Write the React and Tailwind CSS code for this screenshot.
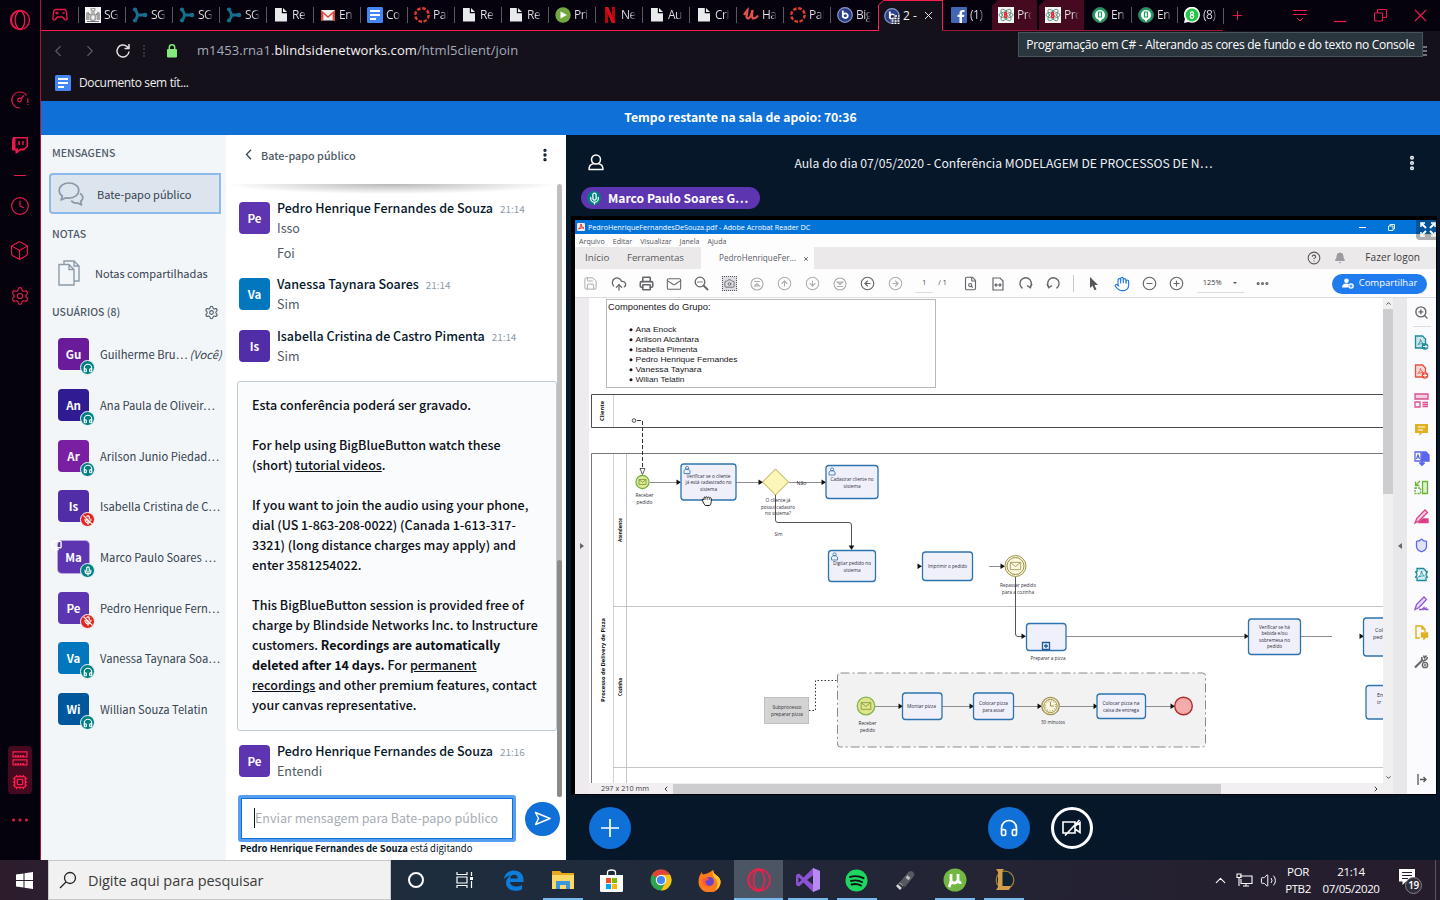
import React from "react";
import {
  Clock, Box, Settings, ChevronLeft, ChevronRight, X, Plus, Headphones, Mic, MicOff,
  Monitor, Search, Save, CloudUpload, Printer, Mail, Camera, CircleArrowLeft, CircleArrowRight,
  CircleArrowUp, CircleArrowDown, FileSearch, RotateCw, RotateCcw, Hand, CircleMinus, CirclePlus,
  CircleHelp, Bell, EllipsisVertical, Ellipsis, ZoomIn, Shield, Volume2, ChevronUp, Cpu,
} from "lucide-react";

const BBB = "font-['Noto_Sans_CJK_JP',sans-serif]";
const UI = "font-['Open_Sans',sans-serif]";

/* ---------- favicons ---------- */
const Fav = ({ kind }) => {
  switch (kind) {
    case "crest":
      return (
        <svg width="16" height="16" viewBox="0 0 16 16"><rect width="16" height="16" fill="#f4f4f4" />
          <path d="M5.500 1h5v2.500l-1.500 1.500h-2L5.500 3.500zM1 6l2-1.500L4.500 6v7H1zM15 6l-2-1.500L11.500 6v7H15zM5 7h6v6l-3 2-3-2z" fill="#a3a3a3" />
          <path d="M6.500 8.500h3v3.500l-1.500 1-1.500-1zM7 2h2v1.300H7z" fill="#f4f4f4" /><path d="M3.500 6.500l1.500 1.500M12.500 6.500L11 8M2 14.500h12M6 6h4" stroke="#555" strokeWidth=".8" /></svg>
      );
    case "tri":
      return (
        <svg width="16" height="16" viewBox="0 0 16 16"><path d="M3 2.500Q5.500 6 5.500 8T3 13.500M5 8H13" fill="none" stroke="#14708f" strokeWidth="3" />
          <circle cx="3" cy="2.500" r="2.100" fill="#14708f" /><circle cx="3" cy="13.500" r="2.100" fill="#14708f" /><circle cx="13" cy="8" r="2.300" fill="#14708f" /></svg>
      );
    case "file":
      return <svg width="16" height="16" viewBox="0 0 16 16"><path d="M2 1h6.800v5.200H14V14.500H2z" fill="#e9eaec" /><path d="M10 1l4 4h-4z" fill="#e9eaec" /></svg>;
    case "gmail":
      return <svg width="16" height="16" viewBox="0 0 16 16"><path d="M1 3h14v10.500H1z" fill="#f1efee" /><path d="M1 13.500V3l7 6 7-6v10.500h-2.300V6.800L8 11 3.300 6.800v6.700z" fill="#dc4738" /></svg>;
    case "docs":
      return <svg width="16" height="16" viewBox="0 0 16 16"><rect width="16" height="16" rx="1.500" fill="#4387f5" /><path d="M3 4h10M3 8h10M3 12h6" stroke="#fff" strokeWidth="1.800" /></svg>;
    case "canvas":
      return <svg width="16" height="16" viewBox="0 0 16 16"><circle cx="8" cy="8" r="6.700" fill="none" stroke="#e23d2c" strokeWidth="2.400" strokeDasharray="3.600 1.660" /></svg>;
    case "play":
      return <svg width="16" height="16" viewBox="0 0 16 16"><circle cx="8" cy="8" r="7.700" fill="#73a83e" /><path d="M5.500 4.500l6.500 3.500-6.500 3.500z" fill="#fff" /></svg>;
    case "netflix":
      return <svg width="16" height="16" viewBox="0 0 16 16"><path d="M3 0h3v16H3zM10 0h3v16h-3z" fill="#b40610" /><path d="M3 0h3.200L13 16H9.800z" fill="#e50914" /></svg>;
    case "udemy":
      return <svg width="16" height="16" viewBox="0 0 16 16"><path d="M1 8Q4 3.500 4.500 3C4 8 2.500 11.500 5 11.500S8.500 7 9.500 3C9 8 8.500 11.500 10.500 11.500S14 10 15 8.500" fill="none" stroke="#ea5252" strokeWidth="2.200" /></svg>;
    case "bbb":
    case "bbb2":
      return (
        <svg width="16" height="16" viewBox="0 0 16 16"><circle cx="8" cy="8" r="7.300" fill="#2a3f8a" stroke="#8c98c8" strokeWidth="1.200" />
          <path d="M5.800 3.500v7M5.800 8.500a2.500 2.300 0 1 1 0 .4" fill="none" stroke="#fff" strokeWidth="1.800" />
          {kind === "bbb2" && <g><rect x="7" y="7" width="9" height="9" fill="#14111a" opacity=".5" /><path d="M7.500 10.500h8M7.500 13h8M7.500 15.500h8M11 8h4.500" stroke="#fff" strokeWidth="1.600" strokeDasharray="2 1" /></g>}</svg>
      );
    case "facebook":
      return <svg width="16" height="16" viewBox="0 0 16 16"><rect width="16" height="16" rx="1" fill="#4267b2" /><path d="M11 16V10h2l.3-2.300H11V6.300c0-.8.300-1.200 1.200-1.200h1.300V3c-3.200-.5-5 .5-5 3v1.700h-2V10h2v6z" fill="#fff" /></svg>;
    case "react":
      return (
        <svg width="16" height="16" viewBox="0 0 16 16"><rect width="16" height="16" fill="#f7f7f4" />
          <g fill="none" stroke="#5d8a80" strokeWidth=".9"><ellipse cx="8" cy="8" rx="7" ry="3" /><ellipse cx="8" cy="8" rx="7" ry="3" transform="rotate(50 8 8)" /><ellipse cx="8" cy="8" rx="7" ry="3" transform="rotate(-50 8 8)" /></g>
          <rect x="5.700" y="5" width="4.600" height="6" fill="#f7f7f4" /><path d="M6.800 5v6M6.800 5.600h1.500q1 1 0 2.200h-1.500M8.300 7.900q1.500 1.200 0 2.500h-1.500" fill="none" stroke="#e21f26" strokeWidth="1.400" /></svg>
      );
    case "green":
      return <svg width="16" height="16" viewBox="0 0 16 16"><circle cx="8" cy="8" r="7.500" fill="#1f9b63" stroke="#3f6e58" /><circle cx="8" cy="8" r="5" fill="#fff" /><path d="M6.500 5h3v5h-3z" fill="none" stroke="#1f9b63" strokeWidth="1.200" /><path d="M8 15l-2-3h4z" fill="#fff" /></svg>;
    default:
      return (
        <svg width="16" height="16" viewBox="0 0 16 16"><path d="M0 16l1-4.200A8 8 0 1 1 4.500 15z" fill="#fff" /><circle cx="8" cy="8" r="6.500" fill="#25c547" />
          <circle cx="8" cy="6.300" r="1.500" fill="none" stroke="#fff" strokeWidth="1.200" /><circle cx="8" cy="9.600" r="1.700" fill="none" stroke="#fff" strokeWidth="1.200" /></svg>
      );
  }
};

const tabsLeft = [
  ["crest", "SG"], ["tri", "SG"], ["tri", "SG"], ["tri", "SG"], ["file", "Re"], ["gmail", "En"], ["docs", "Co"],
  ["canvas", "Pai"], ["file", "Re"], ["file", "Re"], ["play", "Pri"], ["netflix", "Ne"], ["file", "Au"], ["file", "Cri"],
  ["udemy", "Ha"], ["canvas", "Pai"], ["bbb", "Big"],
];

const TabLabel = ({ children }) => (
  <span className="w-[15px] overflow-hidden whitespace-nowrap bg-gradient-to-r from-[#e4e4e6] from-60% to-[#e4e4e600] bg-clip-text text-[12px] tracking-[-0.5px] text-transparent">
    {children}
  </span>
);

const Tab = ({ kind, label, sep = true, className = "" }) => (
  <div className={`flex h-full shrink-0 items-center gap-[3px] ${className}`}>
    <span className={`h-4 w-px ${sep ? "bg-[#5c5862]" : ""}`} />
    <span className="ml-[3px] shrink-0"><Fav kind={kind} /></span>
    <TabLabel>{label}</TabLabel>
  </div>
);

const TabStrip = () => (
  <div className={`flex h-[31px] items-stretch bg-[#06020d] ${UI}`}>
    <div className="flex w-[37px] items-center justify-center border-b border-[#fa1e4e]">
      <svg width="16" height="14" viewBox="0 0 16 14" fill="none" stroke="#e81a4c" strokeWidth="1.300">
        <path d="M3.500 1.500h9q1.500 0 2 3l.7 6q-.5 2.500-2.500 1L10.500 9h-5L3.300 11.500q-2 1.500-2.500-1l.7-6q.5-3 2-3z" /><path d="M3.500 5h3M5 3.500v3M10.500 5h2" />
      </svg>
    </div>
    <div className="flex w-[800px] border-b border-[#fa1e4e]">
      {tabsLeft.map(([k, l], i) => <Tab key={i} kind={k} label={l} className="w-[47px]" />)}
    </div>
    <div className="relative flex w-[65px] items-center bg-[#14111a] pl-[6px] text-[12px] text-[#f2f2f2]">
      <svg className="absolute inset-0" width="66" height="31"><path d="M0 0h6L1 5z" fill="#06020d" /><path d="M0 30.500h.5V5l5-4.500h59v30" fill="none" stroke="#fa1e4e" /></svg>
      <Fav kind="bbb2" />
      <span className="ml-[3px] w-4 overflow-hidden whitespace-nowrap">2 -</span>
      <X size={13} strokeWidth={1.800} className="ml-[3px]" />
    </div>
    <div className="flex w-[280px] border-b border-[#9b1637]">
      <Tab kind="facebook" label="(1)" sep={false} className="w-[49px] pl-px" />
      <div className="mr-[2px] w-[45px] bg-[#450a1f] [clip-path:polygon(6px_0,100%_0,100%_100%,0_100%,0_6px)]"><Tab kind="react" label="Pro" sep={false} className="-ml-px" /></div>
      <div className="w-[45px] bg-[#450a1f] [clip-path:polygon(6px_0,100%_0,100%_100%,0_100%,0_6px)]"><Tab kind="react" label="Pro" sep={false} className="-ml-px" /></div>
      <Tab kind="green" label="En" sep={false} className="ml-px w-[46px]" />
      <Tab kind="green" label="En" className="w-[46px]" />
      <Tab kind="whats" label="(8)" className="w-[46px]" />
    </div>
    <div className="flex flex-1 items-center text-[#e81a4c]">
      <span className="h-4 w-px bg-[#5c5862]" />
      <Plus size={15} strokeWidth={1.500} className="ml-[6px]" />
      <svg className="ml-[47px]" width="16" height="14" viewBox="0 0 16 14" fill="none" stroke="currentColor"><path d="M1 1.500h14M1 5.500h14M5 9l3 3 3-3" /></svg>
      <svg className="ml-[26px]" width="13" height="14" viewBox="0 0 13 14" stroke="currentColor" fill="none"><path d="M0 12.500h12" strokeWidth="1.300" /></svg>
      <svg className="ml-[27px]" width="13" height="13" viewBox="0 0 13 13" fill="none" stroke="currentColor"><path d="M.5 4h8v8h-8zM3.500 4V.5h9v8H8.500" /></svg>
      <svg className="ml-[27px]" width="13" height="13" viewBox="0 0 13 13" stroke="currentColor" strokeWidth="1.200"><path d="M1 1l11 11M12 1L1 12" /></svg>
    </div>
  </div>
);

const AddressBar = () => (
  <div className={`relative flex h-[70px] flex-col bg-[#14111a] ${UI}`}>
    <div className="flex h-[39px] items-center pl-[8px] text-[#5d5a64]">
      <ChevronLeft size={18} strokeWidth={1.500} />
      <ChevronRight size={18} strokeWidth={1.500} className="ml-[14px]" />
      <svg className="ml-[16px] text-[#e2e2e4]" width="16" height="16" viewBox="0 0 16 16" fill="none" stroke="currentColor" strokeWidth="1.500"><path d="M14 8.500A6 6 0 1 1 12 3.500l1.500 1.500M14 1v4.500H9.500" /></svg>
      <span className="ml-[12px] h-[12px] border-l-2 border-dotted border-[#34303c]" />
      <svg className="ml-[22px]" width="10" height="14" viewBox="0 0 10 14"><rect y="5" width="10" height="8.500" rx="1" fill="#83ea7c" /><path d="M2.300 6V3.500a2.700 2.700 0 0 1 5.400 0V6" fill="none" stroke="#83ea7c" strokeWidth="1.500" /></svg>
      <span className="ml-[20px] whitespace-nowrap text-[13px] tracking-[0.080px] text-[#a6acbb]">m1453.rna1.<span className="text-[#f4f4f6]">blindsidenetworks.com</span>/html5client/join</span>
      <svg className="ml-auto mr-[13px] text-[#d8d8dc]" width="9" height="10" viewBox="0 0 9 10" stroke="currentColor"><path d="M2 1h7M4 5h5M2 9h7" /></svg>
    </div>
    <div className="flex h-[26px] items-center pl-[14px]">
      <Fav kind="docs" />
      <span className="ml-[8px] text-[12px] tracking-[-0.350px] text-[#eeeeef]">Documento sem tít...</span>
    </div>
    <div className="absolute left-[977px] top-[1px] flex h-[25px] w-[405px] items-center justify-center whitespace-nowrap border border-[#46545e] bg-[#2b353e] text-[12px] tracking-[-0.27px] text-white">
      Programação em C# - Alterando as cores de fundo e do texto no Console
    </div>
  </div>
);

const OperaRail = () => (
  <div className="flex w-[41px] flex-col items-center border-r border-[#a5173a] bg-[#06020d] pr-px text-[#e81a4c]">
    <svg className="mt-[9px]" width="22" height="22" viewBox="0 0 22 22" fill="none" stroke="currentColor" strokeWidth="1.300"><circle cx="11" cy="11" r="9.500" /><ellipse cx="11" cy="11" rx="4.800" ry="9" /><path d="M8 2.500Q2.500 5 2.500 11T8 19.500" /></svg>
    <svg className="mt-[60px]" width="18" height="18" viewBox="0 0 18 18" fill="none" stroke="currentColor" strokeWidth="1.200"><path d="M9 17A8 8 0 1 1 15.500 4.500M16.800 7.500v4.500M16.800 13v1" /><circle cx="8.500" cy="9" r="1.800" /><path d="M10 7.500l3-3" /></svg>
    <svg className="mt-[27px]" width="18" height="18" viewBox="0 0 18 18"><path d="M2 1h15v9.500l-4 4H9L6 17.500H4.500v-3H1V4z" fill="currentColor" /><path d="M4.500 2.500h11V10l-3 2.500H9L7 14.500v-2H4.500z" fill="#06020d" /><path d="M8 5v4M12 5v4" stroke="currentColor" strokeWidth="1.500" /></svg>
    <span className="mt-[21px] h-px w-3 bg-current" />
    <Clock className="mt-[20px]" size={20} strokeWidth={1.400} />
    <Box className="mt-[24px]" size={21} strokeWidth={1.300} />
    <Settings className="mt-[25px]" size={20} strokeWidth={1.400} />
    <div className="mt-[440px] flex h-[48px] w-6 flex-col items-center gap-[8px] rounded bg-[#450a1f] pt-[5px] text-[#fa1e4e]">
      <svg width="16" height="15" viewBox="0 0 16 15" fill="none" stroke="currentColor" strokeWidth="1.200"><path d="M1 .8h14v5H1zM1 8.800h14v5H1z" /><path d="M3 5h10M3 13h10" strokeDasharray="1.500 1" strokeWidth="2" /></svg>
      <Cpu size={16} strokeWidth={2} />
    </div>
    <svg className="mt-[24px]" width="18" height="4" viewBox="0 0 18 4" fill="currentColor"><circle cx="2.500" cy="2" r="1.500" /><circle cx="9" cy="2" r="1.500" /><circle cx="15.500" cy="2" r="1.500" /></svg>
  </div>
);

/* ---------- participants ---------- */
const users = [
  ["Gu", "Guilherme Bru…", "bg-[#6a1b9a]", "head"], ["An", "Ana Paula de Oliveir…", "bg-[#311b92]", "head"],
  ["Ar", "Arilson Junio Piedad…", "bg-[#7b1fa2]", "head"], ["Is", "Isabella Cristina de C…", "bg-[#512da8]", "muted"],
  ["Ma", "Marco Paulo Soares …", "bg-[#5e35b1]", "mic"], ["Pe", "Pedro Henrique Fern…", "bg-[#5e35b1]", "muted"],
  ["Va", "Vanessa Taynara Soa…", "bg-[#0277bd]", "head"], ["Wi", "Willian Souza Telatin", "bg-[#01579b]", "head"],
];

const Badge = ({ kind }) => (
  <span className={`absolute -bottom-[5px] left-[22px] flex h-[15px] w-[15px] items-center justify-center rounded-full border border-[#f3f6f9] text-white ${kind === "muted" ? "bg-[#df2721]" : "bg-[#008081]"}`}>
    {kind === "head" ? <Headphones size={10} strokeWidth={2.800} /> : kind === "mic" ? <Mic size={10} strokeWidth={2.800} /> : <MicOff size={10} strokeWidth={2.800} />}
  </span>
);

const Avatar = ({ text, color, children, ring = "" }) => (
  <span className={`relative flex h-8 w-[31px] shrink-0 items-center justify-center rounded text-[11.500px] font-bold leading-4 text-white ${color} ${ring}`}>
    {text}{children}
  </span>
);

const Participants = () => (
  <div className={`flex w-[185px] flex-col bg-[#f3f6f9] text-[#4e5a66] ${BBB}`}>
    <div className="mt-[8px] h-5 pl-[11px] text-[10.500px] font-medium leading-5">MENSAGENS</div>
    <div className="ml-[8px] mt-[10px] flex h-[41px] w-[172px] items-center rounded-l border-2 border-[#8cbaec] bg-[#dce4ed] pl-[7px]">
      <svg width="26" height="24" viewBox="0 0 26 24" fill="none" stroke="#8b9aa8" strokeWidth="1.700" strokeLinejoin="round">
        <path d="M11 1C5.500 1 1.200 4.200 1.200 8.500c0 2.400 1.300 4.300 3.200 5.700L3 18l5-2.200c1 .2 2 .3 3 .3 5.500 0 9.800-3.300 9.800-7.600S16.500 1 11 1z" />
        <path d="M22 11.500c1.700 1 2.800 2.500 2.800 4.200 0 1.500-.8 2.700-2 3.600L23.500 23l-3.500-2c-3 .4-5.500-.5-6.700-2.500" />
      </svg>
      <span className="ml-[13px] text-[11px] leading-4 text-[#36434f]">Bate-papo público</span>
    </div>
    <div className="mt-[10px] h-5 pl-[11px] text-[10.500px] font-medium leading-5">NOTAS</div>
    <div className="mt-[8px] flex h-[41px] items-center pl-[17px]">
      <svg width="22" height="26" viewBox="0 0 22 26" fill="none" stroke="#8b9aa8" strokeWidth="1.400"><path d="M6 4V1h10l5 5v15h-5M16 1v5h5" /><path d="M1 4.500h10l5 5V25H1zM11 4.500v5h5" /></svg>
      <span className="ml-[15px] text-[11px] leading-4 text-[#36434f]">Notas compartilhadas</span>
    </div>
    <div className="mt-[9px] flex h-5 items-center justify-between pl-[11px] pr-[7px] text-[10.500px] font-medium leading-5"><span>USUÁRIOS (8)</span><Settings size={15} strokeWidth={1.700} /></div>
    <div className="mt-[7px] flex flex-col">
      {users.map(([ini, name, color, b], i) => (
        <div key={ini} className="flex h-[50.700px] items-center pl-[17px]">
          <Avatar text={ini} color={color} ring={ini === "Ma" ? "ring-1 ring-[#b9a6de]" : ""}>
            <Badge kind={b} />
            {ini === "Ma" && <Monitor size={11} strokeWidth={3} className="absolute -left-[7px] -top-px text-white" />}
          </Avatar>
          <span className="ml-[11px] whitespace-nowrap text-[11.200px] leading-4 text-[#36434f]">{name}{i === 0 && <i className="ml-[2px]">(Você)</i>}</span>
        </div>
      ))}
    </div>
  </div>
);

/* ---------- chat ---------- */
const Msg = ({ ini, color, name, time, lines, className }) => (
  <div className={`flex gap-[7px] pl-[13px] ${className}`}>
    <Avatar text={ini} color={color} />
    <div className="-mt-[4px] flex flex-col text-[12.500px] text-[#4e5a66]">
      <div className="flex h-5 items-center gap-[7px] whitespace-nowrap leading-5"><span className="font-medium text-[#06172a]">{name}</span><span className="pt-[2px] text-[9.900px] text-[#8b9aa8]">{time}</span></div>
      {lines.map((l, i) => <div key={l} className={`h-5 leading-5 ${i ? "mt-[5px]" : ""}`}>{l}</div>)}
    </div>
  </div>
);

const Chat = () => (
  <div className={`flex w-[340px] flex-col bg-white ${BBB}`}>
    <div className="flex h-[39px] shrink-0 items-center pl-[19px] pr-[13px] text-[#3a4753]">
      <svg width="7" height="11" viewBox="0 0 7 11" fill="none" stroke="currentColor" strokeWidth="1.300"><path d="M6 .8L1.500 5.500 6 10.200" /></svg>
      <span className="ml-[9px] text-[10.800px] font-medium leading-4 text-[#4e5a66]">Bate-papo público</span>
      <EllipsisVertical size={16} strokeWidth={3} className="ml-auto text-[#06172a]" />
    </div>
    <div className="mt-[10px] flex h-[613px] shrink-0 justify-between overflow-hidden pr-[4px]">
      <div className="flex w-[331px] flex-col">
        <div className="h-[10px] w-full shrink-0 bg-[radial-gradient(farthest-side_at_50%_0,#00000048,#00000000)]" />
        <Msg className="mt-[8px] h-[76px]" ini="Pe" color="bg-[#5e35b1]" name="Pedro Henrique Fernandes de Souza" time="21:14" lines={["Isso", "Foi"]} />
        <Msg className="h-[52px]" ini="Va" color="bg-[#0277bd]" name="Vanessa Taynara Soares" time="21:14" lines={["Sim"]} />
        <Msg className="h-[51px]" ini="Is" color="bg-[#512da8]" name="Isabella Cristina de Castro Pimenta" time="21:14" lines={["Sim"]} />
        <div className="ml-[11px] h-[350px] w-[320px] shrink-0 whitespace-nowrap rounded-[3px] border border-[#c2cbd4] bg-[#fafbfd] pl-[14px] pt-[13px] text-[12.500px] font-medium leading-5 text-[#0b0f16]">
          Esta conferência poderá ser gravado.<br /><br />
          For help using BigBlueButton watch these<br />(short) <u>tutorial videos</u>.<br /><br />
          If you want to join the audio using your phone,<br />dial (US 1-863-208-0022) (Canada 1-613-317-<br />3321) (long distance charges may apply) and<br />enter 3581254022.<br /><br />
          This BigBlueButton session is provided free of<br />charge by Blindside Networks Inc. to Instructure<br />customers. <b>Recordings are automatically</b><br /><b>deleted after 14 days.</b> For <u>permanent</u><br /><u>recordings</u> and other premium features, contact<br />your canvas representative.
        </div>
        <Msg className="mt-[14px]" ini="Pe" color="bg-[#5e35b1]" name="Pedro Henrique Fernandes de Souza" time="21:16" lines={["Entendi"]} />
      </div>
      <div className="flex w-[5px] flex-col justify-end rounded bg-[#bfbfbf]"><span className="h-[237px] rounded bg-[#8b8b8b]" /></div>
    </div>
    <div className="-mt-[2px] flex items-center pl-[12px]">
      <div className="flex h-[47px] w-[278px] items-center rounded-[3px] border-[3px] border-[#569ff0] bg-white"><div className="flex h-full w-full items-center border border-[#0f70d7] pb-[2px] pl-[12px]">
        <span className="h-5 w-px bg-[#06172a]" /><span className="whitespace-nowrap text-[12.500px] leading-5 text-[#a7adb5]">Enviar mensagem para Bate-papo público</span></div>
      </div>
      <div className="ml-[9px] flex h-[34px] w-[35px] items-center justify-center rounded-full bg-[#0f70d7]">
        <svg width="18" height="15" viewBox="0 0 18 15" fill="none" stroke="#fff" strokeWidth="1.400" strokeLinejoin="round"><path d="M1.500 1.500L16 7.500 1.500 13.500 4.500 7.500z" /></svg>
      </div>
    </div>
    <div className="h-4 whitespace-nowrap pl-[14px] text-[9.450px] leading-[13px] text-[#06172a]"><b>Pedro Henrique Fernandes de Souza</b> está digitando</div>
  </div>
);

/* ---------- BPMN drawing ---------- */
const SvgText = ({ x, y, lines, w, size = 5.4, gap = 6.500 }) => (
  <g fontSize={size} fill="#2e2e38" textAnchor="middle" className={UI}>
    {lines.map((l, i) => <text key={l} x={x} y={y + i * gap} textLength={w && w[i]} lengthAdjust="spacingAndGlyphs">{l}</text>)}
  </g>
);
const Task = ({ x, y, w, h, user }) => (
  <g><rect x={x} y={y} width={w} height={h} rx="3" fill="#f0f0fb" stroke="#2d74ae" strokeWidth="1.300" />
    {user && <path d={`M${x + 3} ${y + 9.500}v-3l2-1.500h2l2 1.500v3zM${x + 4.500} ${y + 4}a1.600 1.600 0 1 1 3.200 0a1.600 1.600 0 1 1-3.200 0`} fill="none" stroke="#2d74ae" strokeWidth=".8" />}</g>
);
const Arrow = ({ x, y }) => <path d={`M${x} ${y}l-4.500-2.800v5.600z`} fill="#111" />;
const Envelope = ({ x, y, s, c }) => <path d={`M${x - s} ${y - s * .7}h${2 * s}v${1.400 * s}h${-2 * s}zl${s} ${s * .8}l${s} ${-s * .8}`} fill="none" stroke={c} strokeWidth=".8" />;

const Diagram = () => (
  <svg width="794" height="485" viewBox="589 298 794 485" className="block bg-white">
    <rect x="606.500" y="299.500" width="329" height="88" fill="#fff" stroke="#b9b9b9" />
    <g className="font-['Liberation_Sans',sans-serif]" fill="#16161a">
      <text x="608" y="310" fontSize="8.800" textLength="102.500" lengthAdjust="spacingAndGlyphs">Componentes do Grupo:</text>
      {[["Ana Enock", 41], ["Arilson Alcântara", 63.500], ["Isabella Pimenta", 62], ["Pedro Henrique Fernandes", 102], ["Vanessa Taynara", 66], ["Wilian Telatin", 49]].map(([t, w], i) => (
        <g key={t}><circle cx="631" cy={329.700 + i * 10} r="1.500" /><text x="635.500" y={332.300 + i * 10} fontSize="8" textLength={w} lengthAdjust="spacingAndGlyphs">{t}</text></g>
      ))}
    </g>
    <g fill="none" stroke="#4c4c50">
      <path d="M1383 394.500H591.500V427.500H1383" /><path d="M1383 453.500H591.500V783" stroke="#77777c" />
      <path d="M613.500 395v32M613.500 454v329" stroke="#d3d3d6" /><path d="M626.500 454v329M613 606.500h770M613 767.500h770" stroke="#c6c6c9" />
    </g>
    <g className={UI} fill="#111" fontWeight="700" textAnchor="middle">
      <text transform="translate(604 411) rotate(-90)" fontSize="6" textLength="20" lengthAdjust="spacingAndGlyphs">Cliente</text>
      <text transform="translate(604.500 660) rotate(-90)" fontSize="6" textLength="84" lengthAdjust="spacingAndGlyphs">Processo de Delivery de Pizza</text>
      <text transform="translate(621.500 530) rotate(-90)" fontSize="4.800" textLength="24" lengthAdjust="spacingAndGlyphs">Atendente</text>
      <text transform="translate(621.500 687) rotate(-90)" fontSize="4.800" textLength="18" lengthAdjust="spacingAndGlyphs">Cozinha</text>
    </g>
    <rect x="837.500" y="673" width="368" height="74" rx="3" fill="#f2f2f2" stroke="#8a8a8a" strokeDasharray="9 3 2 3" />
    <path d="M809 710.500h6.500V680.500h22" fill="none" stroke="#333" strokeDasharray="1.500 2" />
    <rect x="764.500" y="697.500" width="44" height="26" fill="#d3d3d3" stroke="#c0c0c0" />
    <circle cx="634" cy="420.500" r="1.800" fill="#fff" stroke="#222" strokeWidth=".8" />
    <path d="M637 420.500h5.500V468" fill="none" stroke="#333" strokeDasharray="4 2" /><path d="M640 468.500h5l-2.500 6z" fill="#fff" stroke="#333" strokeWidth=".8" />
    <g fill="none" stroke="#8e8e92"><path d="M650 482.500h30M736 482.500h26M789 482.500h37M875 706.500h27M942 706.500h31M1014 706.500h27M1060 706.500h37M1146 706.500h28M1066 636.500h182M1301 636.500h31M989 566.500h15" />
      <path d="M775.500 495v25q0 2.500 2.500 2.500h71q2.500 0 2.500 2.500v24M1015.500 577v57q0 2.500 2.500 2.500h5" stroke="#55555a" /></g>
    {[[681, 482], [763, 482], [826, 482], [922, 566], [1005, 566], [1026, 636], [1249, 636], [1364, 636], [903, 706], [974, 706], [1042, 706], [1098, 706], [1175, 706]].map(([x, y]) => <Arrow key={`${x}-${y}`} x={x} y={y + .3} />)}
    <path d="M851.500 550l-2.800-4.500h5.600z" fill="#111" />
    <Task x={681} y={464} w={55} h={36} user /><Task x={826} y={465.500} w={52} h={33} user /><Task x={828.500} y={550.500} w={47} h={31} user />
    <Task x={922.500} y={552} w={50} h={28.500} /><Task x={1026.500} y={623.500} w={39.500} h={27} /><Task x={1248.500} y={619} w={52} h={35.500} />
    <Task x={1363.500} y={618} w={40} h={38} /><Task x={1366} y={685.500} w={40} h={33.500} />
    <Task x={902.500} y={693} w={39.500} h={26.500} /><Task x={973.500} y={693} w={40} h={26.500} /><Task x={1097} y={694} w={48.500} h={24.500} />
    <path d="M1042.500 642.500h7v7h-7zM1044 646h4M1046 644v4" fill="none" stroke="#1c5e98" strokeWidth="1.300" />
    <path d="M775.500 469l13 13-13 13-13-13z" fill="#fdf6bb" stroke="#b3a544" />
    <path d="M775.500 495v24" stroke="#55555a" />
    <circle cx="642.500" cy="482" r="6.600" fill="#dfe896" stroke="#6fae3a" strokeWidth="1.200" /><Envelope x={642.500} y={482} s={3.500} c="#77963a" />
    <circle cx="866" cy="706" r="8.800" fill="#dfe48c" stroke="#7fb34a" strokeWidth="1.200" /><Envelope x={866} y={706} s={4.800} c="#7c9638" />
    <g fill="#fbf7e0" stroke="#9c8f4a"><circle cx="1015.500" cy="566" r="10.500" /><circle cx="1015.500" cy="566" r="8.500" /><circle cx="1050.500" cy="706" r="8.700" strokeWidth="1.300" /><circle cx="1050.500" cy="706" r="6.600" /></g>
    <Envelope x={1015.500} y={566} s={5.200} c="#9c8f4a" /><path d="M1050.500 702v4h3.500" fill="none" stroke="#9c8f4a" />
    <circle cx="1050.500" cy="706" r="5" fill="none" stroke="#9c8f4a" strokeDasharray="1 1.600" />
    <circle cx="1183.500" cy="706" r="8.800" fill="#f4abab" stroke="#b02a2a" strokeWidth="1.400" />
    <SvgText x={644.500} y={497} lines={["Receber", "pedido"]} w={[18, 16]} />
    <SvgText x={708.500} y={477.500} lines={["Verificar se o cliente", "já está cadastrado no", "sistema"]} w={[44, 46, 17]} />
    <SvgText x={801.500} y={484.500} lines={["Não"]} w={[10]} />
    <SvgText x={852} y={481} lines={["Cadastrar cliente no", "sistema"]} w={[43, 17]} />
    <SvgText x={778} y={502} lines={["O cliente já", "possui cadastro", "no sistema?"]} w={[25, 34, 26]} />
    <SvgText x={778.500} y={535.500} lines={["Sim"]} w={[8]} />
    <SvgText x={852} y={565} lines={["Digitar pedido no", "sistema"]} w={[38, 17]} />
    <SvgText x={947.500} y={568} lines={["Imprimir o pedido"]} w={[39]} />
    <SvgText x={1018} y={587} lines={["Repassar pedido", "para a cozinha"]} w={[36, 32]} />
    <SvgText x={1048} y={660} lines={["Preparar a pizza"]} w={[35]} />
    <SvgText x={1274.500} y={628.500} lines={["Verificar se há", "bebida e/ou", "sobremesa no", "pedido"]} w={[31, 26, 31, 15]} />
    <g className={UI} fontSize="5.400" fill="#2e2e38"><text x="1375" y="632">Col</text><text x="1373" y="638.500">ped</text><text x="1377" y="697">En</text><text x="1377" y="704">tr</text></g>
    <SvgText x={787} y={709} lines={["Subprocesso", "preparar pizza"]} w={[29, 32]} />
    <SvgText x={867.500} y={725} lines={["Receber", "pedido"]} w={[18, 15]} />
    <SvgText x={921.500} y={708} lines={["Montar pizza"]} w={[29]} />
    <SvgText x={993.500} y={705} lines={["Colocar pizza", "para assar"]} w={[29, 22]} />
    <SvgText x={1053} y={723.500} lines={["30 minutos"]} w={[24]} />
    <SvgText x={1121} y={705} lines={["Colocar pizza na", "caixa de entrega"]} w={[37, 36]} />
    <g fill="none" stroke="#222" strokeWidth="1"><path d="M703.500 503l-1.500-3.500q1-1 2 .5V497.500q1-1.200 1.800 0 1-1.200 1.900 0 1-1 1.900.3 1.300-.6 1.700.7v3q-.3 2.500-1.500 4h-4.500z" fill="#fff" /><path d="M705.800 497.500v2.500M707.700 497.500v2.500M709.600 498v2" strokeWidth=".6" /></g>
  </svg>
);

/* ---------- shared screen ---------- */
const IconCell = ({ children, dim }) => <span className={`flex w-[27.700px] shrink-0 items-center justify-center ${dim ? "text-[#adadb0]" : "text-[#66666a]"}`}>{children}</span>;
const PageTool = ({ c, badge }) => (
  <svg width="15" height="15" viewBox="0 0 15 15" fill="none" stroke={c} strokeWidth="1.300"><path d="M1.500 1h7l3 3v9h-10z" fill={c} fillOpacity=".2" /><path d="M4 9.500q2.500-2.500 2.500-5 .5 3 3 4-3 0-5.500 1" strokeWidth=".8" /><circle cx="11" cy="11.500" r="3.300" fill={c} stroke="none" /><path d={badge} stroke="#fff" strokeWidth="1" /></svg>
);
const Rotate = ({ flip }) => (
  <svg width="15" height="15" viewBox="0 0 15 15" fill="none" stroke="currentColor" strokeWidth="1.400" className={flip ? "-scale-x-100" : ""}><path d="M4.500 12.300A5.700 5.700 0 1 1 12.500 10.500M9 9.500l3.300 2.200L14 8" /></svg>
);

const SharedScreen = () => (
  <div className={`relative ml-[5px] flex h-[579px] w-[866px] flex-col border-[4px] border-b border-r border-black bg-white text-[#3c3c40] ${UI}`}>
    <div className="flex h-[14px] shrink-0 items-center bg-[#0274d8] pl-[2px] text-[7.200px] text-white">
      <svg width="8" height="8" viewBox="0 0 8 8"><rect width="8" height="8" rx="1" fill="#f4e8e8" /><path d="M1.500 6q3-2 2.500-5 0 3.500 3 4-3-.5-5.500 1" fill="none" stroke="#d3302a" strokeWidth=".9" /></svg>
      <span className="ml-[3px] whitespace-nowrap">PedroHenriqueFernandesDeSouza.pdf - Adobe Acrobat Reader DC</span>
      <span className="ml-auto mr-[22px] h-px w-[7px] bg-white" />
      <svg className="mr-[41px]" width="7" height="7" viewBox="0 0 7 7" fill="none" stroke="#fff" strokeWidth=".9"><path d="M.5 2h4.500v4.500H.5zM2 2V.5h4.500V5H5" /></svg>
    </div>
    <div className="flex h-[13px] shrink-0 items-center gap-[8px] bg-[#fdfdfe] pl-[4px] pt-px text-[7.100px] text-[#55555a]"><span>Arquivo</span><span>Editar</span><span>Visualizar</span><span>Janela</span><span>Ajuda</span></div>
    <div className="flex h-[22px] shrink-0 items-center bg-[#ebe9ea] pl-[10px] text-[9.800px] text-[#5a5a5e]">
      <span className="w-[42px]">Início</span><span className="w-[74px] tracking-[-0.130px]">Ferramentas</span>
      <span className="flex h-full w-[113px] items-center whitespace-nowrap bg-[#fdfdfe] pl-[18px] pt-px text-[8.100px] tracking-[0.050px]">PedroHenriqueFer...<X size={6} strokeWidth={3.500} className="ml-[7px]" /></span>
      <CircleHelp size={14} strokeWidth={1.900} className="ml-auto" /><Bell size={12} fill="#9c9ca0" className="ml-[13px] text-[#9c9ca0]" />
      <span className="ml-[19px] mr-[16px] text-[10.100px] tracking-[0.030px] text-[#3c3c40]">Fazer logon</span>
    </div>
    <div className="flex h-[29px] shrink-0 items-center border-b border-[#dcdce0] bg-[#fdfdfe] pl-[2px] pt-px">
      <IconCell dim><Save size={15} strokeWidth={1.600} /></IconCell><IconCell><CloudUpload size={16} strokeWidth={1.900} /></IconCell>
      <IconCell><Printer size={15} strokeWidth={2.500} /></IconCell><IconCell><Mail size={16} strokeWidth={1.600} /></IconCell>
      <IconCell><svg width="15" height="15" viewBox="0 0 15 15" fill="none" stroke="currentColor" strokeWidth="1.300"><circle cx="6" cy="6" r="4.800" /><path d="M9.500 9.500L14 14" strokeWidth="1.800" /><path d="M3.500 6h5" strokeDasharray="1 1" /></svg></IconCell>
      <IconCell><span className="flex h-[15px] w-[15px] items-center justify-center border border-dotted border-[#55555a] bg-[#dedee2]"><Camera size={11} strokeWidth={2} /></span></IconCell>
      <IconCell dim><svg width="14" height="14" viewBox="0 0 14 14" fill="none" stroke="currentColor" strokeWidth="1.100"><circle cx="7" cy="7" r="6" /><path d="M4 4.500h6M4.500 9L7 6.500 9.500 9z" /></svg></IconCell>
      <IconCell dim><CircleArrowUp size={15} strokeWidth={1.700} /></IconCell><IconCell dim><CircleArrowDown size={15} strokeWidth={1.700} /></IconCell>
      <IconCell dim><svg width="14" height="14" viewBox="0 0 14 14" fill="none" stroke="currentColor" strokeWidth="1.100"><circle cx="7" cy="7" r="6" /><path d="M4 9.500h6M4.500 5L7 7.500 9.500 5z" /></svg></IconCell>
      <IconCell><CircleArrowLeft size={15} strokeWidth={1.800} /></IconCell><IconCell dim><CircleArrowRight size={15} strokeWidth={1.700} /></IconCell>
      <span className="ml-[6px] flex h-[18px] w-[18px] items-center justify-center border-b border-[#dcdce0] text-[7px]">1</span><span className="ml-[5px] w-[18px] text-[7px]">/ 1</span>
      <IconCell><FileSearch size={15} strokeWidth={1.800} /></IconCell>
      <IconCell><svg width="12" height="14" viewBox="0 0 12 14" fill="none" stroke="currentColor" strokeWidth="1.200"><path d="M1 4.500V1h7l3 3v9H1zM3 8h6M4.500 6.500L3 8l1.500 1.500M7.500 6.500L9 8 7.500 9.500" /></svg></IconCell>
      <IconCell><Rotate /></IconCell><IconCell><Rotate flip /></IconCell>
      <span className="ml-[6px] mr-[6px] h-[17px] w-px bg-[#c8c8cc]" />
      <IconCell><svg width="10" height="14" viewBox="0 0 10 14"><path d="M1 0l8 8H5.500l2 4.500-2 .8-1.900-4.500L1 11z" fill="#55555a" /></svg></IconCell>
      <span className="flex w-[27.700px] justify-center text-[#2376d8]"><Hand size={16} strokeWidth={1.700} /></span>
      <IconCell><CircleMinus size={15} strokeWidth={1.900} /></IconCell><IconCell><CirclePlus size={15} strokeWidth={1.900} /></IconCell>
      <span className="ml-[6px] flex h-[18px] w-[47px] items-center justify-between border-b border-[#dcdce0] pl-[6px] pr-[7px] text-[7.400px]">125%<span className="border-x-2 border-t-[2px] border-x-transparent border-t-[#55555a]" /></span>
      <Ellipsis size={15} strokeWidth={3} className="ml-[11px] text-[#66666a]" />
      <span className="ml-auto mr-[9px] flex h-5 w-[95px] items-center justify-center gap-[5px] rounded-full bg-[#1f7bee] text-[9.500px] text-white">
        <svg width="12" height="11" viewBox="0 0 12 11" fill="#fff"><circle cx="4.500" cy="2.700" r="2.300" /><path d="M0 9.500q0-4 4.500-4 1.500 0 2.300.7-1.300 1.300-.6 3.300z" /><circle cx="9" cy="8" r="2.800" /><path d="M9 6.500v3M7.500 8h3" stroke="#1f7bee" /></svg>
        Compartilhar</span>
    </div>
    <div className="flex min-h-0 flex-1">
      <div className="flex w-[14px] items-center justify-center bg-[#eeeaed]"><span className="border-y-[3.500px] border-l-[4px] border-y-transparent border-l-[#66666a]" /></div>
      <div className="flex w-[794px] flex-col"><Diagram />
        <div className="flex h-[11px] items-center bg-[#f1eff1]"><span className="w-[73px] whitespace-nowrap pl-[12px] text-[7.300px]">297 x 210 mm</span><ChevronLeft size={8} strokeWidth={3} className="mr-[3px]" /><span className="h-[10px] w-[548px] bg-[#cdcdcf]" /><ChevronRight size={8} strokeWidth={3} className="ml-auto mr-[3px]" /></div>
      </div>
      <div className="flex w-[10px] flex-col items-center bg-[#f0f0f1]"><ChevronUp size={7} strokeWidth={3} className="my-[2px] shrink-0" /><span className="h-[185px] w-full bg-[#cdcdcf]" /><ChevronUp size={7} strokeWidth={3} className="mb-[13px] mt-auto rotate-180" /></div>
      <div className="flex w-[14px] items-center justify-center bg-[#e8e8ea]"><span className="border-y-[3.500px] border-r-[4px] border-y-transparent border-r-[#66666a]" /></div>
      <div className="flex flex-1 flex-col items-center bg-[#fbfafd]">
        <div className="mt-[7px] flex h-[22px] w-[18px] justify-center border-b border-[#dcdce0]"><ZoomIn size={15} strokeWidth={2.200} className="text-[#66666a]" /></div>
        <div className="mt-[8px] flex flex-col items-center gap-[14px]">
          <PageTool c="#1a8c9c" badge="M9 11.500h4M11.500 10l1.500 1.500-1.500 1.500" /><PageTool c="#e8523e" badge="M9 11.500h4M11 9.500v4" />
          <svg width="15" height="15" viewBox="0 0 15 15" fill="none" stroke="#dc4f93" strokeWidth="1.300"><path d="M1 1h13v5H1z" fill="#f6cfe0" /><path d="M1 9h5v5H1zM8.500 9.500H14M8.500 11.500H14M8.500 13.500H14" /></svg>
          <svg width="15" height="15" viewBox="0 0 15 15"><path d="M1 2h13v9H8l-2.500 3v-3H1z" fill="#e0b120" /><path d="M4 5h7M4 8h5" stroke="#fff" /></svg>
          <svg width="16" height="15" viewBox="0 0 16 15" fill="none" stroke="#5b66ea" strokeWidth="1.300"><path d="M1 1h6v9H1zM2.500 8L4 4l1.500 4" /><path d="M8 1h4l3 3v6H8z" fill="#5b66ea" /><path d="M8 6v8M5.500 11.500L8 14l2.500-2.500" strokeWidth="1.800" /></svg>
          <svg width="15" height="15" viewBox="0 0 15 15" fill="none" stroke="#6db33a" strokeWidth="1.300"><path d="M8.500 1.500h5v12h-5z" fill="#dbf0cb" /><path d="M1 8h5.500v5.500H1z" strokeDasharray="2 1" /><path d="M6 1L2 5M1.500 1.500v4H5.500" /></svg>
          <svg width="15" height="15" viewBox="0 0 15 15" fill="#f7cfe0" stroke="#dc3f86" strokeWidth="1.300"><path d="M1 14l2-5 8-8 2.500 2.500-8 8L1 14z" /><path d="M5 13.500L9 10h5v3.500z" fill="#dc3f86" /></svg>
          <Shield size={15} strokeWidth={2} fill="#e0e2fb" className="text-[#5b66ea]" />
          <svg width="15" height="15" viewBox="0 0 15 15" fill="none" stroke="#1a8c9c" strokeWidth="1.300"><path d="M3 5V1.500h6.500L12 4v1M3 10v3.500h9V10M1 4.500q2 .5 2 3T1 10.500M14 4.500q-2 .5-2 3t2 3" fill="#d3eef0" /><path d="M4.500 10Q7.500 8 7.500 4q.5 4 3 5-3-.5-6 1" strokeWidth=".9" /></svg>
          <svg width="15" height="15" viewBox="0 0 15 15" fill="#e9dcf8" stroke="#8e54d4" strokeWidth="1.300"><path d="M1 13.500l1.500-5L10 1l2.500 2.500-7.500 8-4 2zM5 13.500h3l2-2v2l2-1.500v1.500h2.500" /></svg>
          <svg width="15" height="15" viewBox="0 0 15 15" fill="none" stroke="#e0b120" strokeWidth="1.400"><path d="M6 13H2V1h6l3 3v3M8 1v3h3" /><path d="M7.500 8h6v4h-2l-1.500 2v-2H7.500z" fill="#e0b120" /></svg>
          <svg width="15" height="15" viewBox="0 0 15 15" fill="none" stroke="#66666a" strokeWidth="2.200"><path d="M1 13.500l7-7" /><path d="M12.500 1.500L10.500 4l-1-2.500M8 3q-1 3 1.500 4l3-1.500 1-2.500" strokeWidth="1.500" /><circle cx="11" cy="11" r="2.700" strokeWidth="1.300" fill="#fff" /><path d="M9.500 11h3M11 9.500v3" strokeWidth="1" /></svg>
        </div>
        <svg className="mb-[9px] mt-auto" width="10" height="11" viewBox="0 0 10 11" fill="none" stroke="#55555a" strokeWidth="1.300"><path d="M1 0v11M3 5.500h6M6.500 3L9 5.500 6.500 8" /></svg>
      </div>
    </div>
    <div className="absolute -top-px right-0 flex h-[21px] w-5 items-center justify-center rounded-bl bg-black/30">
      <svg className="ml-[3px]" width="16" height="15" viewBox="0 0 16 15" stroke="#fff" strokeWidth="2" fill="none"><path d="M6 6L1.500 1.500M10 6l4.500-4.500M6 9l-4.500 4.500M10 9l4.500 4.500" /><path d="M1 5V1h4M11 1h4v4M1 10v4h4M11 14h4v-4" strokeWidth="1.500" /></svg>
    </div>
  </div>
);

const Stage = () => (
  <div className={`flex w-[874px] flex-col bg-[#06172a] ${BBB}`}>
    <div className="flex h-[52px] items-center pl-[22px] pr-[19px] pt-[3px] text-[#eef1f4]">
      <svg width="16" height="17" viewBox="0 0 16 17" fill="none" stroke="#fff" strokeWidth="1.500"><circle cx="8" cy="5.500" r="4.500" /><path d="M1 15.500q0-5 4.500-5.700M15 15.500q0-5-4.500-5.700M.5 15.500h15" /></svg>
      <span className="flex-1 whitespace-nowrap text-center text-[12.200px] leading-5">Aula do dia 07/05/2020 - Conferência MODELAGEM DE PROCESSOS DE N…</span>
      <EllipsisVertical size={18} strokeWidth={3.500} />
    </div>
    <div className="ml-[15px] flex h-[22px] w-[179px] items-center gap-[7px] rounded-full bg-[#5e35b1] pl-[6px] text-[12.100px] font-bold leading-5 text-white">
      <span className="flex h-[14px] w-[14px] items-center justify-center rounded-full bg-[#008081]"><Mic size={13} strokeWidth={2.300} /></span><span className="whitespace-nowrap">Marco Paulo Soares G…</span>
    </div>
    <div className="mt-[7px]"><SharedScreen /></div>
    <div className="flex flex-1 items-center pl-[23px] text-white">
      <span className="flex h-[42px] w-[42px] items-center justify-center rounded-full bg-[#0f70d7] shadow"><svg width="20" height="20" stroke="#fff" strokeWidth="1.700"><path d="M10 1v18M1 10h18" /></svg></span>
      <span className="ml-[357px] flex h-[42px] w-[42px] items-center justify-center rounded-full bg-[#0f70d7]"><Headphones size={20} strokeWidth={2} /></span>
      <span className="ml-[21px] flex h-[42px] w-[42px] items-center justify-center rounded-full border-[3px] border-white">
        <svg width="20" height="17" viewBox="0 0 20 17" fill="none" stroke="#fff" strokeWidth="1.600"><path d="M1 3h12v11H1zM13 7l5-3.500v10L13 10M3 16.500L17.500 1" /></svg>
      </span>
    </div>
  </div>
);

/* ---------- taskbar ---------- */
const AppCell = ({ children, active, run }) => (
  <div className={`relative flex h-10 w-[49.050px] items-center justify-center ${active ? "bg-[#4c5564]" : ""}`}>{children}
    {run && <span className={`absolute bottom-0 h-[2px] bg-[#76b9ed] ${active ? "w-full" : "w-[40px]"}`} />}</div>
);

const Taskbar = () => (
  <div className={`flex h-10 items-center bg-gradient-to-r from-[#2c1c2c] via-[#1d2d3e] via-30% to-[#261c2c] text-white ${UI}`}>
    <div className="flex w-12 justify-center"><svg width="17" height="17" viewBox="0 0 17 17" fill="#fff"><path d="M0 2.500l7.500-1V8H0zM8.500 1.300L17 0v8H8.500zM0 9h7.500v6.500L0 14.500zM8.500 9H17v8l-8.500-1.200z" /></svg></div>
    <div className="flex h-10 w-[343px] items-center border border-[#c8c8c8] bg-[#f1f1f1] pl-[10px] text-[#3a3a3a]">
      <svg width="18" height="18" viewBox="0 0 18 18" fill="none" stroke="#222" strokeWidth="1.300"><circle cx="11" cy="7" r="5.500" /><path d="M7 11L1 17" /></svg>
      <span className="ml-[11px] pt-px text-[14.500px] tracking-[-0.060px]">Digite aqui para pesquisar</span></div>
    <AppCell><span className="h-[16px] w-[16px] rounded-full border-2 border-white" /></AppCell>
    <AppCell><svg width="18" height="16" viewBox="0 0 18 16" fill="none" stroke="#fff" strokeWidth="1.200"><path d="M1 0v2.500h10V0M1 5h10v6H1zM1 16v-2.500h10V16M15.500 0v4M15.500 9v7" /><path d="M14 5h3v3h-3z" fill="#fff" stroke="none" /></svg></AppCell>
    <AppCell><svg width="21" height="21" viewBox="0 0 21 21"><path d="M.5 9.500C2 3 6 .5 11 .5c6 0 9.500 4 9.500 9v2.500H7c.3 3 3 4.500 6 4.500 2.300 0 4.500-.6 6-1.600v4.300c-2 1-4.300 1.500-6.800 1.500C7 20.700 3 17.500 3 13c0-3.500 2-6 5-7.500-3.500.3-6 2-7.500 4zM7.200 8.500h7.500c0-2.300-1.300-3.700-3.500-3.700S7.500 6.300 7.200 8.500z" fill="#0c7ddb" /></svg></AppCell>
    <AppCell run><svg width="22" height="20" viewBox="0 0 22 20"><path d="M0 1h8l2 2h12v16H0z" fill="#e8a71c" /><path d="M0 5h22v14H0z" fill="#fcd867" /><path d="M4 19v-8h14v8h-4v-4H8v4z" fill="#3a96dd" /></svg></AppCell>
    <AppCell><svg width="23" height="23" viewBox="0 0 23 23"><path d="M7.500 6V3.500q0-2.500 4-2.500t4 2.500V6" fill="none" stroke="#fff" strokeWidth="1.300" /><path d="M0 6h23v15.500q0 1.500-1.500 1.500h-20Q0 23 0 21.500z" fill="#fff" /><path d="M6 9h5v5H6z" fill="#f25022" /><path d="M12 9h5v5h-5z" fill="#7fba00" /><path d="M6 15h5v5H6z" fill="#00a4ef" /><path d="M12 15h5v5h-5z" fill="#ffb900" /></svg></AppCell>
    <AppCell><svg width="22" height="22" viewBox="0 0 22 22"><circle cx="11" cy="11" r="10.500" fill="#2fa44f" /><path d="M11 11L1.900 5.700A10.500 10.500 0 0 1 20.100 5.700z" fill="#e24335" /><path d="M11 5.700h9.100A10.500 10.500 0 0 1 11 21.500l4.600-8z" fill="#fbc117" /><circle cx="11" cy="11" r="5.200" fill="#fff" /><circle cx="11" cy="11" r="4.100" fill="#4285f4" /></svg></AppCell>
    <AppCell><svg width="23" height="23" viewBox="0 0 23 23"><path d="M4 3q0 2 1 2.500l4-1Q12 3 15 1q0 3 3 5 5 3 4.500 8A11 10 0 0 1 .5 13Q.5 7 4 3z" fill="#ff7a1c" /><path d="M15 1q0 3 3 5 5 3 4.500 8-1 5-5 7 4-6 0-11-4-4-2.500-9z" fill="#ffc72c" /><circle cx="11.500" cy="12.500" r="4.500" fill="#6a45c9" /><path d="M4 10q4-2 7 0-2 2-4 2 1 5 5 5-7 3-8-7z" fill="#ff5a34" /></svg></AppCell>
    <AppCell active run><svg width="24" height="24" viewBox="0 0 24 24" fill="none" stroke="#e8234c"><circle cx="12" cy="12" r="11" strokeWidth="1.600" /><ellipse cx="12" cy="12" rx="5.500" ry="10" strokeWidth="1.800" /><path d="M9 2Q3 5 3 12t6 10" /></svg></AppCell>
    <AppCell run><svg width="24" height="24" viewBox="0 0 24 24"><path d="M17 0l7 3v18l-7 3L7.500 14.500 3 18.500 0 17V7l3-1.500 4.500 4zM17.500 7L11 12l6.500 5zM2.500 9v6l3-3z" fill="#8b52d3" /><path d="M17 0l7 3v18l-7 3z" fill="#b78af0" /></svg></AppCell>
    <AppCell run><svg width="23" height="23" viewBox="0 0 23 23"><circle cx="11.500" cy="11.500" r="11" fill="#1ed760" /><path d="M5 8q7-2.200 13.500 1.200M6 12q6-1.700 11 1M6.500 15.500q5-1.300 9.500 1" fill="none" stroke="#111" strokeWidth="1.900" strokeLinecap="round" /></svg></AppCell>
    <AppCell><svg width="22" height="22" viewBox="0 0 22 22"><path d="M4 14L13 3.500Q15 1 17.500 2.500T19 7L10 18z" fill="#565a60" /><path d="M1 17l3.500-3.500L8.500 17 5 21z" fill="#d8dadd" /><path d="M4 14l6 4.500-2 1.500-5-4.500z" fill="#33373c" /><path d="M11.500 7.500l3 2.500" stroke="#b8bcc2" strokeWidth="3" /></svg></AppCell>
    <AppCell run><svg width="24" height="24" viewBox="0 0 24 24"><circle cx="12" cy="12" r="11.500" fill="#72b741" /><path d="M8 6v5.500q0 3.500 3 3.500t4-3V6M15 11q0 4.500 3.500 3.500M8 12q0 4-2 7" fill="none" stroke="#fff" strokeWidth="2.800" /></svg></AppCell>
    <AppCell run><svg width="22" height="24" viewBox="0 0 22 24"><circle cx="12" cy="12" r="8.800" fill="#0c2434" stroke="#a07c35" strokeWidth="1.300" /><path d="M3 1h8L9.500 3v15H18l-2 4H3l2-3V4z" fill="#d29e49" /></svg></AppCell>
    <div className="ml-auto flex items-center">
      <ChevronUp size={17} strokeWidth={1.500} />
      <svg className="ml-[7px]" width="17" height="14" viewBox="0 0 17 14" fill="none" stroke="#fff" strokeWidth="1.100"><path d="M4 3h12v7.500H5V6M1 1h4v3.500H1zM3 4.500v8.500M7 13h6M10 10.500V13" /></svg>
      <Volume2 size={17} strokeWidth={1.400} className="ml-[7px]" />
      <div className="ml-[6px] w-[30px] text-center text-[11.500px] leading-[17px] tracking-[-0.400px]">POR<br />PTB2</div>
      <div className="ml-[7px] w-[62px] whitespace-nowrap text-center text-[11.500px] leading-[17px] tracking-[-0.400px]">21:14<br />07/05/2020</div>
      <div className="relative ml-[16px] mr-[11px] h-6 w-[26px]"><svg width="18" height="18" viewBox="0 0 18 18"><path d="M1 1h16v12.500H8L4.500 17v-3.500H1z" fill="#fff" /><path d="M4 4.500h10M4 7.500h10M4 10.500h6" stroke="#241c2c" /></svg>
        <span className="absolute left-[7px] top-[9px] flex h-[17px] w-[17px] items-center justify-center rounded-full border border-[#82808a] bg-[#302c38] text-[10px] font-semibold tracking-[-0.500px]">19</span></div>
      <span className="mr-[4px] h-10 w-px bg-[#5a5562]" />
    </div>
  </div>
);

export default function App() {
  return (
    <div className="flex h-[900px] w-[1440px] flex-col overflow-hidden">
      <div className="flex h-[860px]">
        <OperaRail />
        <div className="flex min-w-0 flex-1 flex-col">
          <TabStrip />
          <AddressBar />
          <div className={`flex h-[34px] items-center justify-center bg-[#0f70d7] pb-px text-[12.200px] font-bold text-white ${BBB}`}>Tempo restante na sala de apoio: 70:36</div>
          <div className="flex h-[725px]">
            <Participants /><Chat /><Stage />
          </div>
        </div>
      </div>
      <Taskbar />
    </div>
  );
}
